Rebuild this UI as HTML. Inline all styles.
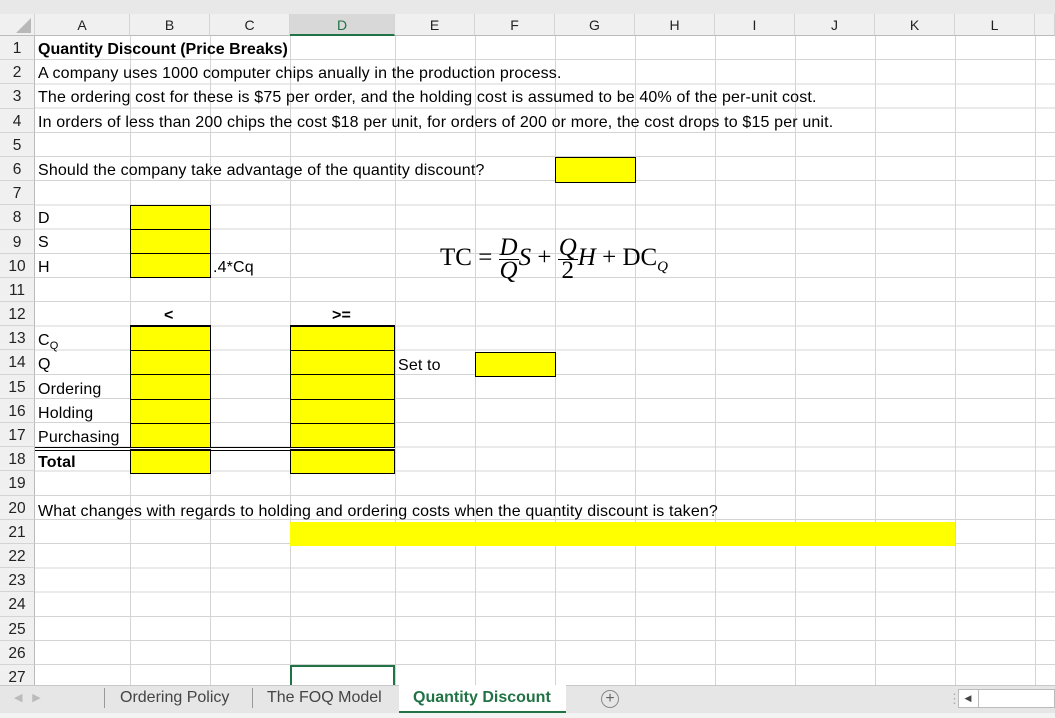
<!DOCTYPE html>
<html><head><meta charset="utf-8"><style>
body{margin:0;width:1055px;height:718px;overflow:hidden;background:#fff;font-family:"Liberation Sans",sans-serif;position:relative}
.a{position:absolute}
.t{position:absolute;font-size:16px;letter-spacing:0.15px;white-space:nowrap;color:#000;line-height:25px}
.y{position:absolute;background:#ff0;border:1px solid #000;box-sizing:border-box}
.hd{position:absolute;top:14px;height:22px;line-height:22px;text-align:center;font-size:14px;color:#222;border-right:1px solid #d4d4d4;background:#f0f0f0;box-sizing:border-box;border-bottom:1px solid #bbb}
#rows{position:absolute;left:0;top:36px;width:35px}
#rows div{height:24.2px;box-sizing:border-box;text-align:center;font-size:15.5px;color:#222;background:#f0f0f0;border-bottom:1px solid #d4d4d4;border-right:1px solid #bbb;line-height:25px}
#grid{position:absolute;left:35px;top:36px;width:1020px;height:649px;background:repeating-linear-gradient(to bottom,transparent 0,transparent 23.2px,#d4d4d4 23.2px,#d4d4d4 24.2px)}
.v{position:absolute;top:36px;width:1px;height:649px;background:#d4d4d4}
.fr{display:inline-block;vertical-align:middle;text-align:center;line-height:22px}
.fr span{display:block;padding:0 1px}
</style></head><body>
<div class="a" style="left:0;top:0;width:1055px;height:14px;background:#e8e8e8"></div>
<div id="grid"></div>
<div class="v" style="left:130px"></div><div class="v" style="left:210px"></div><div class="v" style="left:290px"></div><div class="v" style="left:395px"></div><div class="v" style="left:475px"></div><div class="v" style="left:555px"></div><div class="v" style="left:635px"></div><div class="v" style="left:715px"></div><div class="v" style="left:795px"></div><div class="v" style="left:875px"></div><div class="v" style="left:955px"></div><div class="v" style="left:1035px"></div>
<div class="hd" style="left:0;width:35px"><svg width="35" height="22"><polygon points="31,4 31,19 16,19" fill="#b8b8b8"/></svg></div>
<div class="hd" style="left:35px;width:95px">A</div>
<div class="hd" style="left:130px;width:80px">B</div>
<div class="hd" style="left:210px;width:80px">C</div>
<div class="hd" style="left:290px;width:105px;color:#217346;border-bottom:2px solid #217346;background:#d8d8d8">D</div>
<div class="hd" style="left:395px;width:80px">E</div>
<div class="hd" style="left:475px;width:80px">F</div>
<div class="hd" style="left:555px;width:80px">G</div>
<div class="hd" style="left:635px;width:80px">H</div>
<div class="hd" style="left:715px;width:80px">I</div>
<div class="hd" style="left:795px;width:80px">J</div>
<div class="hd" style="left:875px;width:80px">K</div>
<div class="hd" style="left:955px;width:80px">L</div>
<div class="hd" style="left:1035px;width:20px"></div>
<div id="rows"><div>1</div><div>2</div><div>3</div><div>4</div><div>5</div><div>6</div><div>7</div><div>8</div><div>9</div><div>10</div><div>11</div><div>12</div><div>13</div><div>14</div><div>15</div><div>16</div><div>17</div><div>18</div><div>19</div><div>20</div><div>21</div><div>22</div><div>23</div><div>24</div><div>25</div><div>26</div><div>27</div></div>
<div class="t" style="left:38px;top:37px;font-weight:bold;letter-spacing:0">Quantity Discount (Price Breaks)</div>
<div class="t" style="left:38px;top:61px">A company uses 1000 computer chips anually in the production process.</div>
<div class="t" style="left:38px;top:85px">The ordering cost for these is $75 per order, and the holding cost is assumed to be 40% of the per-unit cost.</div>
<div class="t" style="left:38px;top:110px">In orders of less than 200 chips the cost $18 per unit, for orders of 200 or more, the cost drops to $15 per unit.</div>
<div class="t" style="left:38px;top:158px">Should the company take advantage of the quantity discount?</div>
<div class="y" style="left:555px;top:157px;width:81px;height:26px"></div>
<div class="t" style="left:38px;top:206px">D</div>
<div class="t" style="left:38px;top:230px">S</div>
<div class="t" style="left:38px;top:255px">H</div>
<div class="y" style="left:130px;top:205px;width:81px;height:25px"></div>
<div class="y" style="left:130px;top:229px;width:81px;height:25px"></div>
<div class="y" style="left:130px;top:253px;width:81px;height:25px"></div>
<div class="t" style="left:213px;top:255px">.4*Cq</div>
<div class="a" style="left:440px;top:228px;font-family:'Liberation Serif',serif;font-size:25px;line-height:60px;white-space:nowrap">TC =
<span class="fr"><span style="border-bottom:1.5px solid #000;font-style:italic">D</span><span style="font-style:italic">Q</span></span><i>S</i> +
<span class="fr"><span style="border-bottom:1.5px solid #000;font-style:italic">Q</span><span>2</span></span><i>H</i> + DC<sub style="font-size:15px;font-style:italic">Q</sub></div>
<div class="t" style="left:164px;top:303px;font-weight:bold">&lt;</div>
<div class="t" style="left:332px;top:303px;font-weight:bold">&gt;=</div>
<div class="a" style="left:130px;top:325px;width:81px;height:2px;background:#000"></div>
<div class="a" style="left:290px;top:325px;width:105px;height:2px;background:#000"></div>
<div class="t" style="left:38px;top:328px">C<sub style="font-size:11px">Q</sub></div>
<div class="t" style="left:38px;top:352px">Q</div>
<div class="t" style="left:38px;top:377px">Ordering</div>
<div class="t" style="left:38px;top:401px">Holding</div>
<div class="t" style="left:38px;top:425px">Purchasing</div>
<div class="t" style="left:38px;top:450px;font-weight:bold">Total</div>
<div class="t" style="left:398px;top:353px">Set to</div>
<div class="y" style="left:475px;top:352px;width:81px;height:25px"></div>
<div class="y" style="left:130px;top:326px;width:81px;height:25.2px"></div><div class="y" style="left:290px;top:326px;width:105px;height:25.2px"></div>
<div class="y" style="left:130px;top:350.2px;width:81px;height:25.2px"></div><div class="y" style="left:290px;top:350.2px;width:105px;height:25.2px"></div>
<div class="y" style="left:130px;top:374.4px;width:81px;height:25.2px"></div><div class="y" style="left:290px;top:374.4px;width:105px;height:25.2px"></div>
<div class="y" style="left:130px;top:398.6px;width:81px;height:25.2px"></div><div class="y" style="left:290px;top:398.6px;width:105px;height:25.2px"></div>
<div class="y" style="left:130px;top:422.8px;width:81px;height:25.2px"></div><div class="y" style="left:290px;top:422.8px;width:105px;height:25.2px"></div>
<div class="y" style="left:130px;top:449px;width:81px;height:25px"></div><div class="y" style="left:290px;top:449px;width:105px;height:25px"></div>
<div class="a" style="left:35px;top:447px;width:360px;height:1px;background:#000"></div>
<div class="a" style="left:35px;top:450px;width:360px;height:1px;background:#000"></div>
<div class="t" style="left:38px;top:499px">What changes with regards to holding and ordering costs when the quantity discount is taken?</div>
<div class="a" style="left:290px;top:522px;width:665px;height:24px;background:#ff0"></div>
<div class="a" style="left:290px;top:665px;width:105px;height:22px;border:2px solid #217346;box-sizing:border-box"></div>
<div class="a" style="left:0;top:685px;width:1055px;height:28px;background:#e6e6e6;border-top:1px solid #c8c8c8"></div>
<div class="a" style="left:0;top:713px;width:1055px;height:5px;background:#f3f3f3"></div>
<div class="t" style="left:14px;top:686px;color:#bbb;font-size:11px">◀&nbsp;&nbsp;&nbsp;▶</div>
<div class="a" style="left:104px;top:688px;width:1px;height:20px;background:#999"></div>
<div class="t" style="left:120px;top:685px;color:#444;font-size:16px;letter-spacing:0">Ordering Policy</div>
<div class="a" style="left:252px;top:688px;width:1px;height:20px;background:#999"></div>
<div class="t" style="left:267px;top:685px;color:#444;font-size:16px;letter-spacing:0">The FOQ Model</div>
<div class="a" style="left:399px;top:685px;width:167px;height:26px;background:#fff;border-bottom:2px solid #217346"></div>
<div class="t" style="left:413px;top:685px;color:#217346;font-size:16px;font-weight:bold;letter-spacing:0">Quantity Discount</div>
<div class="a" style="left:601px;top:690px;width:18px;height:18px;border:1px solid #888;border-radius:50%;box-sizing:border-box;text-align:center;line-height:15px;color:#666;font-size:16px">+</div>
<div class="t" style="left:948px;top:686px;color:#aaa;font-size:13px">⋮</div>
<div class="a" style="left:958px;top:689px;width:97px;height:19px;background:#fff;border:1px solid #bbb;box-sizing:border-box"></div>
<div class="a" style="left:958px;top:689px;width:20px;height:19px;border-right:1px solid #bbb;text-align:center;font-size:9px;line-height:19px;color:#444">◀</div>
</body></html>
